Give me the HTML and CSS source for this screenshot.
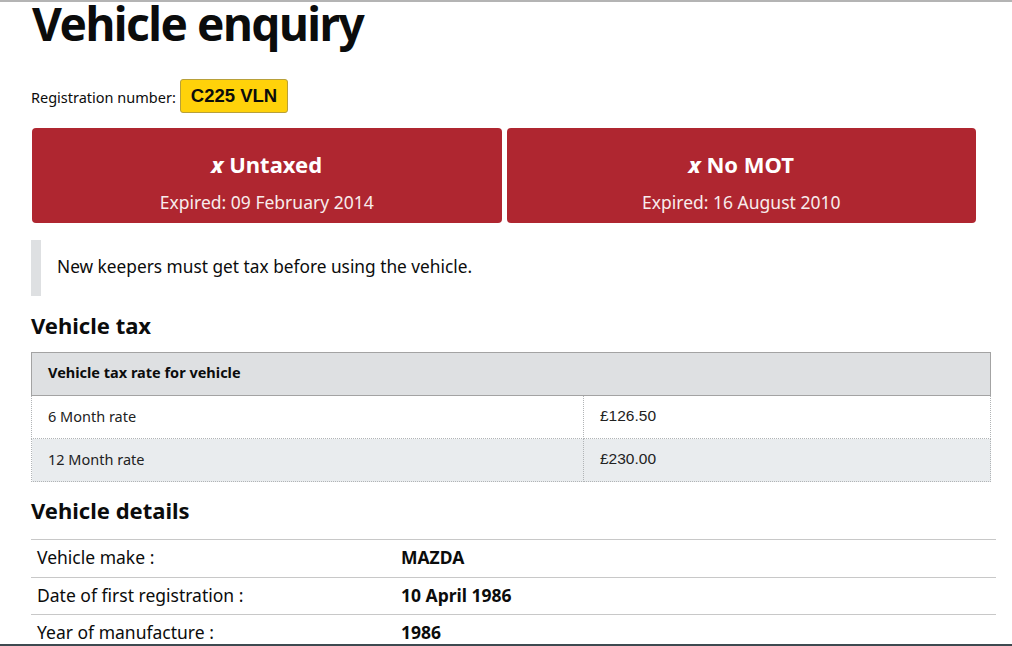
FILE: index.html
```html
<!DOCTYPE html>
<html lang="en">
<head>
<meta charset="utf-8">
<title>Vehicle enquiry</title>
<link rel="stylesheet" href="styles.css">
</head>
<body>
<main class="page">
  <h1 class="title">Vehicle enquiry</h1>
  <p class="reg">Registration number: <span class="plate">C225 VLN</span></p>
  <div class="status">
    <div class="status-box">
      <h2 class="status-title"><span class="cross">x</span> Untaxed</h2>
      <p class="status-date">Expired: 09 February 2014</p>
    </div>
    <div class="status-box">
      <h2 class="status-title"><span class="cross">x</span> No MOT</h2>
      <p class="status-date">Expired: 16 August 2010</p>
    </div>
  </div>
  <div class="inset">New keepers must get tax before using the vehicle.</div>
  <h2 class="heading heading-tax">Vehicle tax</h2>
  <table class="tax">
    <thead>
      <tr><th colspan="2">Vehicle tax rate for vehicle</th></tr>
    </thead>
    <tbody>
      <tr><td class="label">6 Month rate</td><td class="amount">£126.50</td></tr>
      <tr class="alt"><td class="label">12 Month rate</td><td class="amount">£230.00</td></tr>
    </tbody>
  </table>
  <h2 class="heading heading-details">Vehicle details</h2>
  <dl class="details">
    <div class="detail-row"><dt>Vehicle make :</dt><dd>MAZDA</dd></div>
    <div class="detail-row"><dt>Date of first registration :</dt><dd>10 April 1986</dd></div>
    <div class="detail-row"><dt>Year of manufacture :</dt><dd>1986</dd></div>
  </dl>
</main>
</body>
</html>
```

FILE: styles.css
```css
html, body {
  margin: 0;
  padding: 0;
  background: #ffffff;
  height: 100%;
  overflow: hidden;
}
body {
  font-family: "Noto Sans", "Liberation Sans", sans-serif;
  color: #0b0c0c;
  border-top: 2px solid #b4b4b4;
  border-bottom: 2px solid #3d4a50;
  box-sizing: border-box;
}
.page {
  padding: 0 0 0 31px;
  width: 965px;
}
.title {
  margin: 0;
  font-size: 46px;
  line-height: 42px;
  font-weight: 700;
  letter-spacing: -1.5px;
  padding-left: 1px;
}
.reg {
  margin: 35px 0 0 0;
  font-size: 14.5px;
  display: flex;
  align-items: center;
  gap: 4px;
  height: 34px;
  padding-top: 2px;
  box-sizing: border-box;
}
.plate {
  display: inline-block;
  background: #ffd20a;
  border: 1px solid #b8a03a;
  border-radius: 3px;
  font-family: "Liberation Sans", Arial, sans-serif;
  font-weight: 700;
  font-size: 18.5px;
  padding: 0 10px;
  height: 34px;
  line-height: 32px;
  box-sizing: border-box;
  margin-top: -2px;
}
.status {
  display: flex;
  gap: 5px;
  margin: 15px 0 0 1px;
  width: 944px;
}
.status-box {
  flex: 1;
  background: #af2630;
  color: #ffffff;
  border-radius: 4px;
  height: 95px;
  text-align: center;
  box-sizing: border-box;
  padding-top: 21px;
}
.status-title {
  margin: 0;
  font-size: 22px;
  line-height: 30px;
  font-weight: 700;
}
.cross {
  font-style: italic;
  font-weight: 800;
}
.status-date {
  margin: 11px 0 0 0;
  font-size: 17.5px;
  line-height: 24px;
  color: #f8ecec;
}
.inset {
  margin: 17px 0 0 0;
  border-left: 10px solid #dee0e2;
  padding-left: 16px;
  padding-bottom: 3px;
  height: 56px;
  box-sizing: border-box;
  display: flex;
  align-items: center;
  font-size: 17.3px;
}
.heading {
  margin: 0;
  font-size: 22px;
  line-height: 30px;
  font-weight: 700;
}
.heading-tax {
  margin-top: 14px;
}
.heading-details {
  margin-top: 13px;
}
.tax {
  margin-top: 12px;
  width: 960px;
  border-collapse: collapse;
  font-size: 14.5px;
}
.tax th {
  background: #dee0e2;
  border: 1px solid #a3a3a3;
  text-align: left;
  padding: 0 16px 4px 16px;
  height: 38px;
  font-weight: 700;
}
.tax td {
  border: 1px dotted #b1b4b6;
  padding: 0 16px 3px 16px;
  height: 39px;
  color: #222222;
}
.tax td.label {
  width: 519px;
}
.tax td.amount {
  font-family: "Liberation Sans", Arial, sans-serif;
  font-size: 15.5px;
  padding-bottom: 2px;
  height: 40px;
}
.tax tr.alt td {
  background: #e9ecee;
}
.details {
  margin: 14px 0 0 0;
  width: 965px;
}
.detail-row {
  display: flex;
  border-top: 1px solid #c8c8c8;
  height: 37.5px;
  box-sizing: border-box;
  align-items: center;
  padding-bottom: 2px;
  font-size: 17.5px;
}
.detail-row dt {
  width: 364px;
  padding-left: 6px;
}
.detail-row dd {
  margin: 0;
  font-weight: 700;
}
```
